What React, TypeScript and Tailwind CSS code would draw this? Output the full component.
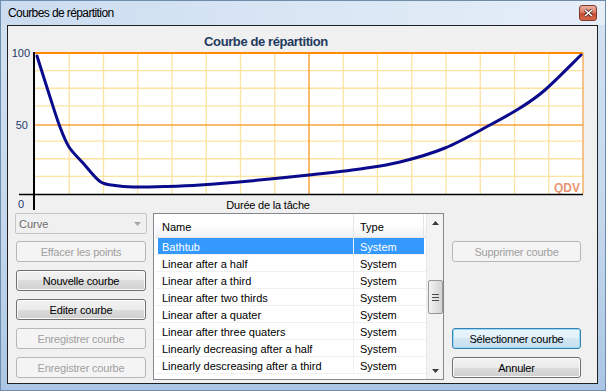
import React from "react";

const FONT = { fontFamily: '"Liberation Sans", Arial, sans-serif' };

const curvePts: [number, number][] = [
  [37, 56], [50, 97], [60, 127], [69, 147], [83, 163], [100, 181.5], [115, 185.5],
  [133, 187], [165, 186.5], [200, 185], [250, 181], [309, 175], [360, 169],
  [400, 162], [445, 148], [490, 125], [520, 108], [545, 90], [581, 55],
];

// catmull-rom -> bezier so the curve stays smooth
const smoothPath = (p: [number, number][]) => {
  let d = `M${p[0][0]},${p[0][1]}`;
  for (let i = 0; i < p.length - 1; i++) {
    const p0 = p[i - 1] || p[i];
    const p1 = p[i];
    const p2 = p[i + 1];
    const p3 = p[i + 2] || p2;
    const c1x = p1[0] + (p2[0] - p0[0]) / 6;
    const c1y = p1[1] + (p2[1] - p0[1]) / 6;
    const c2x = p2[0] - (p3[0] - p1[0]) / 6;
    const c2y = p2[1] - (p3[1] - p1[1]) / 6;
    d += ` C${c1x},${c1y} ${c2x},${c2y} ${p2[0]},${p2[1]}`;
  }
  return d;
};

const Chart = () => {
  const left = 35, right = 583, top = 53, bottom = 194;
  const vx = Array.from({ length: 15 }, (_, i) => left + ((right - left) / 16) * (i + 1));
  const hy = Array.from({ length: 7 }, (_, i) => top + ((bottom - top) / 8) * (i + 1));
  return (
    <svg width={589} height={185} viewBox="8 26 589 185" className="block shrink-0">
      <text x={266} y={46} textAnchor="middle" fontSize={13} fontWeight="bold" fill="#233a5e" letterSpacing={-0.4} style={FONT}>
        Courbe de répartition
      </text>
      <rect x={left} y={top} width={right - left} height={bottom - top} fill="#ffffff" />
      {vx.map((x, i) => i !== 7 && <line key={"v" + i} x1={x} y1={top} x2={x} y2={bottom} stroke="#fbe3a2" strokeWidth={1.3} />)}
      {hy.map((y, i) => i !== 3 && <line key={"h" + i} x1={left} y1={y} x2={right} y2={y} stroke="#fbe3a2" strokeWidth={1.3} />)}
      <line x1={309} y1={top} x2={309} y2={bottom} stroke="#f7a33a" strokeWidth={1.5} />
      <line x1={left} y1={125} x2={right} y2={125} stroke="#f7a33a" strokeWidth={1.5} />
      <line x1={left} y1={top} x2={right} y2={top} stroke="#ff8a00" strokeWidth={2} />
      <line x1={right} y1={top} x2={right} y2={bottom} stroke="#f9a040" strokeWidth={1.2} />
      <text x={580} y={192} textAnchor="end" fontSize={12} fontWeight="bold" fill="#e99470" style={FONT}>QDV</text>
      <path d={smoothPath(curvePts)} fill="none" stroke="#0a0a8c" strokeWidth={3} strokeLinecap="round" strokeLinejoin="round" />
      <line x1={34} y1={top - 1} x2={34} y2={210} stroke="#000" strokeWidth={2} />
      <line x1={19} y1={194.5} x2={583} y2={194.5} stroke="#000" strokeWidth={1.5} />
      <text x={30} y={57} textAnchor="end" fontSize={11} fill="#1e3a6a" style={FONT}>100</text>
      <text x={28} y={129} textAnchor="end" fontSize={11} fill="#1e3a6a" style={FONT}>50</text>
      <text x={24} y={208} textAnchor="end" fontSize={11} fill="#1e3a6a" style={FONT}>0</text>
      <text x={268} y={209} textAnchor="middle" fontSize={11} fill="#000" letterSpacing={-0.2} style={FONT}>Durée de la tâche</text>
    </svg>
  );
};

type BtnProps = { label: string; disabled?: boolean; def?: boolean; className?: string };

const Btn = ({ label, disabled, def, className = "" }: BtnProps) => {
  let look =
    "border-[#707070] bg-[linear-gradient(#f2f2f2_0%,#ebebeb_50%,#dddddd_50%,#cfcfcf_100%)] text-black shadow-[inset_0_0_0_1px_#fbfbfb]";
  if (disabled) look = "border-[#b5b8ba] bg-[#f4f4f4] text-[#a0a0a0]";
  if (def)
    look =
      "border-[#3c7fb1] bg-[linear-gradient(#eaf6fd_0%,#e4f0f8_50%,#d3e7f3_50%,#c6deee_100%)] text-black shadow-[inset_0_0_0_1px_#93dcf8]";
  return (
    <div
      className={`h-[21px] w-full rounded-[3px] border flex items-center justify-center pt-[1px] text-[11px] tracking-[-0.2px] ${look} ${className}`}
    >
      {label}
    </div>
  );
};

const rows = [
  "Bathtub",
  "Linear after a half",
  "Linear after a third",
  "Linear after two thirds",
  "Linear after a quater",
  "Linear after three quaters",
  "Linearly decreasing after a half",
  "Linearly descreasing after a third",
];

const ListView = () => (
  <div className="w-[291px] h-[167px] border border-[#828790] bg-white flex overflow-hidden">
    <div className="flex-1 flex flex-col pl-[1px] overflow-hidden">
      <div className="h-[24px] flex shrink-0 bg-[linear-gradient(#ffffff_0%,#ffffff_40%,#f1f2f4_100%)] border-b border-[#e5e5e5]">
        <div className="w-[199px] pl-[7px] pt-[3px] flex items-center border-r border-[#e3e5e8]">Name</div>
        <div className="w-[70px] pl-[6px] pt-[3px] flex items-center border-r border-[#e3e5e8]">Type</div>
      </div>
      {rows.map((r, i) => (
        <div key={r} className="h-[17px] flex shrink-0 border-b border-[#f0f0f0]">
          <div className={`w-[199px] flex items-center border-r border-[#f0f0f0] ${i === 0 ? "pl-[3px]" : "pl-[7px] pt-[2px]"}`}>
            {i === 0 ? (
              <div className="h-full w-full bg-[#3399ff] text-white flex items-center pl-[4px] pt-[2px]">{r}</div>
            ) : (
              r
            )}
          </div>
          <div className={`w-[70px] pl-[6px] pt-[2px] flex items-center ${i === 0 ? "bg-[#3399ff] text-white" : ""}`}>System</div>
        </div>
      ))}
    </div>
    <div className="w-[17px] shrink-0 bg-[#f3f3f3] border-l border-[#e8e8e8] flex flex-col items-center">
      <div className="h-[17px] flex items-center justify-center">
        <svg width="7" height="4" viewBox="0 0 7 4"><path d="M0 4 L3.5 0 L7 4 Z" fill="#3a3a3a" /></svg>
      </div>
      <div className="mt-[49px] w-[15px] h-[34px] rounded-[2px] border border-[#979797] bg-[linear-gradient(90deg,#f4f4f4,#e2e2e2_50%,#d4d4d4)] flex flex-col items-center justify-center gap-[2px]">
        <div className="w-[7px] h-[1px] bg-[#4d4d4d]" />
        <div className="w-[7px] h-[1px] bg-[#4d4d4d]" />
        <div className="w-[7px] h-[1px] bg-[#4d4d4d]" />
      </div>
      <div className="mt-auto h-[17px] flex items-center justify-center">
        <svg width="7" height="4" viewBox="0 0 7 4"><path d="M0 0 L3.5 4 L7 0 Z" fill="#3a3a3a" /></svg>
      </div>
    </div>
  </div>
);

export default function App() {
  return (
    <div
      style={FONT}
      className="w-[606px] h-[391px] flex flex-col border border-[#6f8cab] bg-[linear-gradient(#d3e2f2,#c3d7ec_60%,#aac6e4)] text-[11px] text-black"
    >
      <div className="h-[24px] shrink-0 flex items-center justify-between pl-[7px] pr-[8px] bg-[linear-gradient(90deg,#cbdcf0,#d9e6f4_50%,#e6eef8)]">
        <span className="text-[12px] tracking-[-0.6px] text-black">Courbes de répartition</span>
        <div className="w-[18px] h-[16px] rounded-[3px] border border-[#7e3a2c] bg-[linear-gradient(#eab0a0_0%,#dc8068_45%,#c74a30_55%,#d46a4e_100%)] flex items-center justify-center">
          <svg width="9" height="8" viewBox="0 0 9 8">
            <path d="M1 1 L8 7 M8 1 L1 7" stroke="#4a2a22" strokeWidth="3" />
            <path d="M1 1 L8 7 M8 1 L1 7" stroke="#ffffff" strokeWidth="1.6" />
          </svg>
        </div>
      </div>
      <div className="flex-1 ml-[6px] mr-[7px] mb-[6px] border border-[#202020] bg-[#f0f0f0] flex flex-col">
        <Chart />
        <div className="flex pl-[8px] pt-[2px]">
          <div className="w-[130px] flex flex-col">
            <div className="h-[21px] -mx-[1px] rounded-[2px] border border-[#c5c5c5] bg-[#f0f0f0] flex items-center justify-between pl-[3px] pr-[5px] pt-[1px] text-[#6d6d6d]">
              <span>Curve</span>
              <svg width="7" height="4" viewBox="0 0 7 4"><path d="M0 0 L3.5 4 L7 0 Z" fill="#a8a8a8" /></svg>
            </div>
            <Btn label="Effacer les points" disabled className="mt-[7px]" />
            <Btn label="Nouvelle courbe" className="mt-[8px]" />
            <Btn label="Editer courbe" className="mt-[8px]" />
            <Btn label="Enregistrer courbe" disabled className="mt-[8px]" />
            <Btn label="Enregistrer courbe" disabled className="mt-[8px]" />
          </div>
          <div className="ml-[7px]">
            <ListView />
          </div>
          <div className="ml-[8px] w-[129px] flex flex-col pt-[28px]">
            <Btn label="Supprimer courbe" disabled />
            <Btn label="Sélectionner courbe" def className="mt-[66px]" />
            <Btn label="Annuler" className="mt-[8px]" />
          </div>
        </div>
      </div>
    </div>
  );
}
